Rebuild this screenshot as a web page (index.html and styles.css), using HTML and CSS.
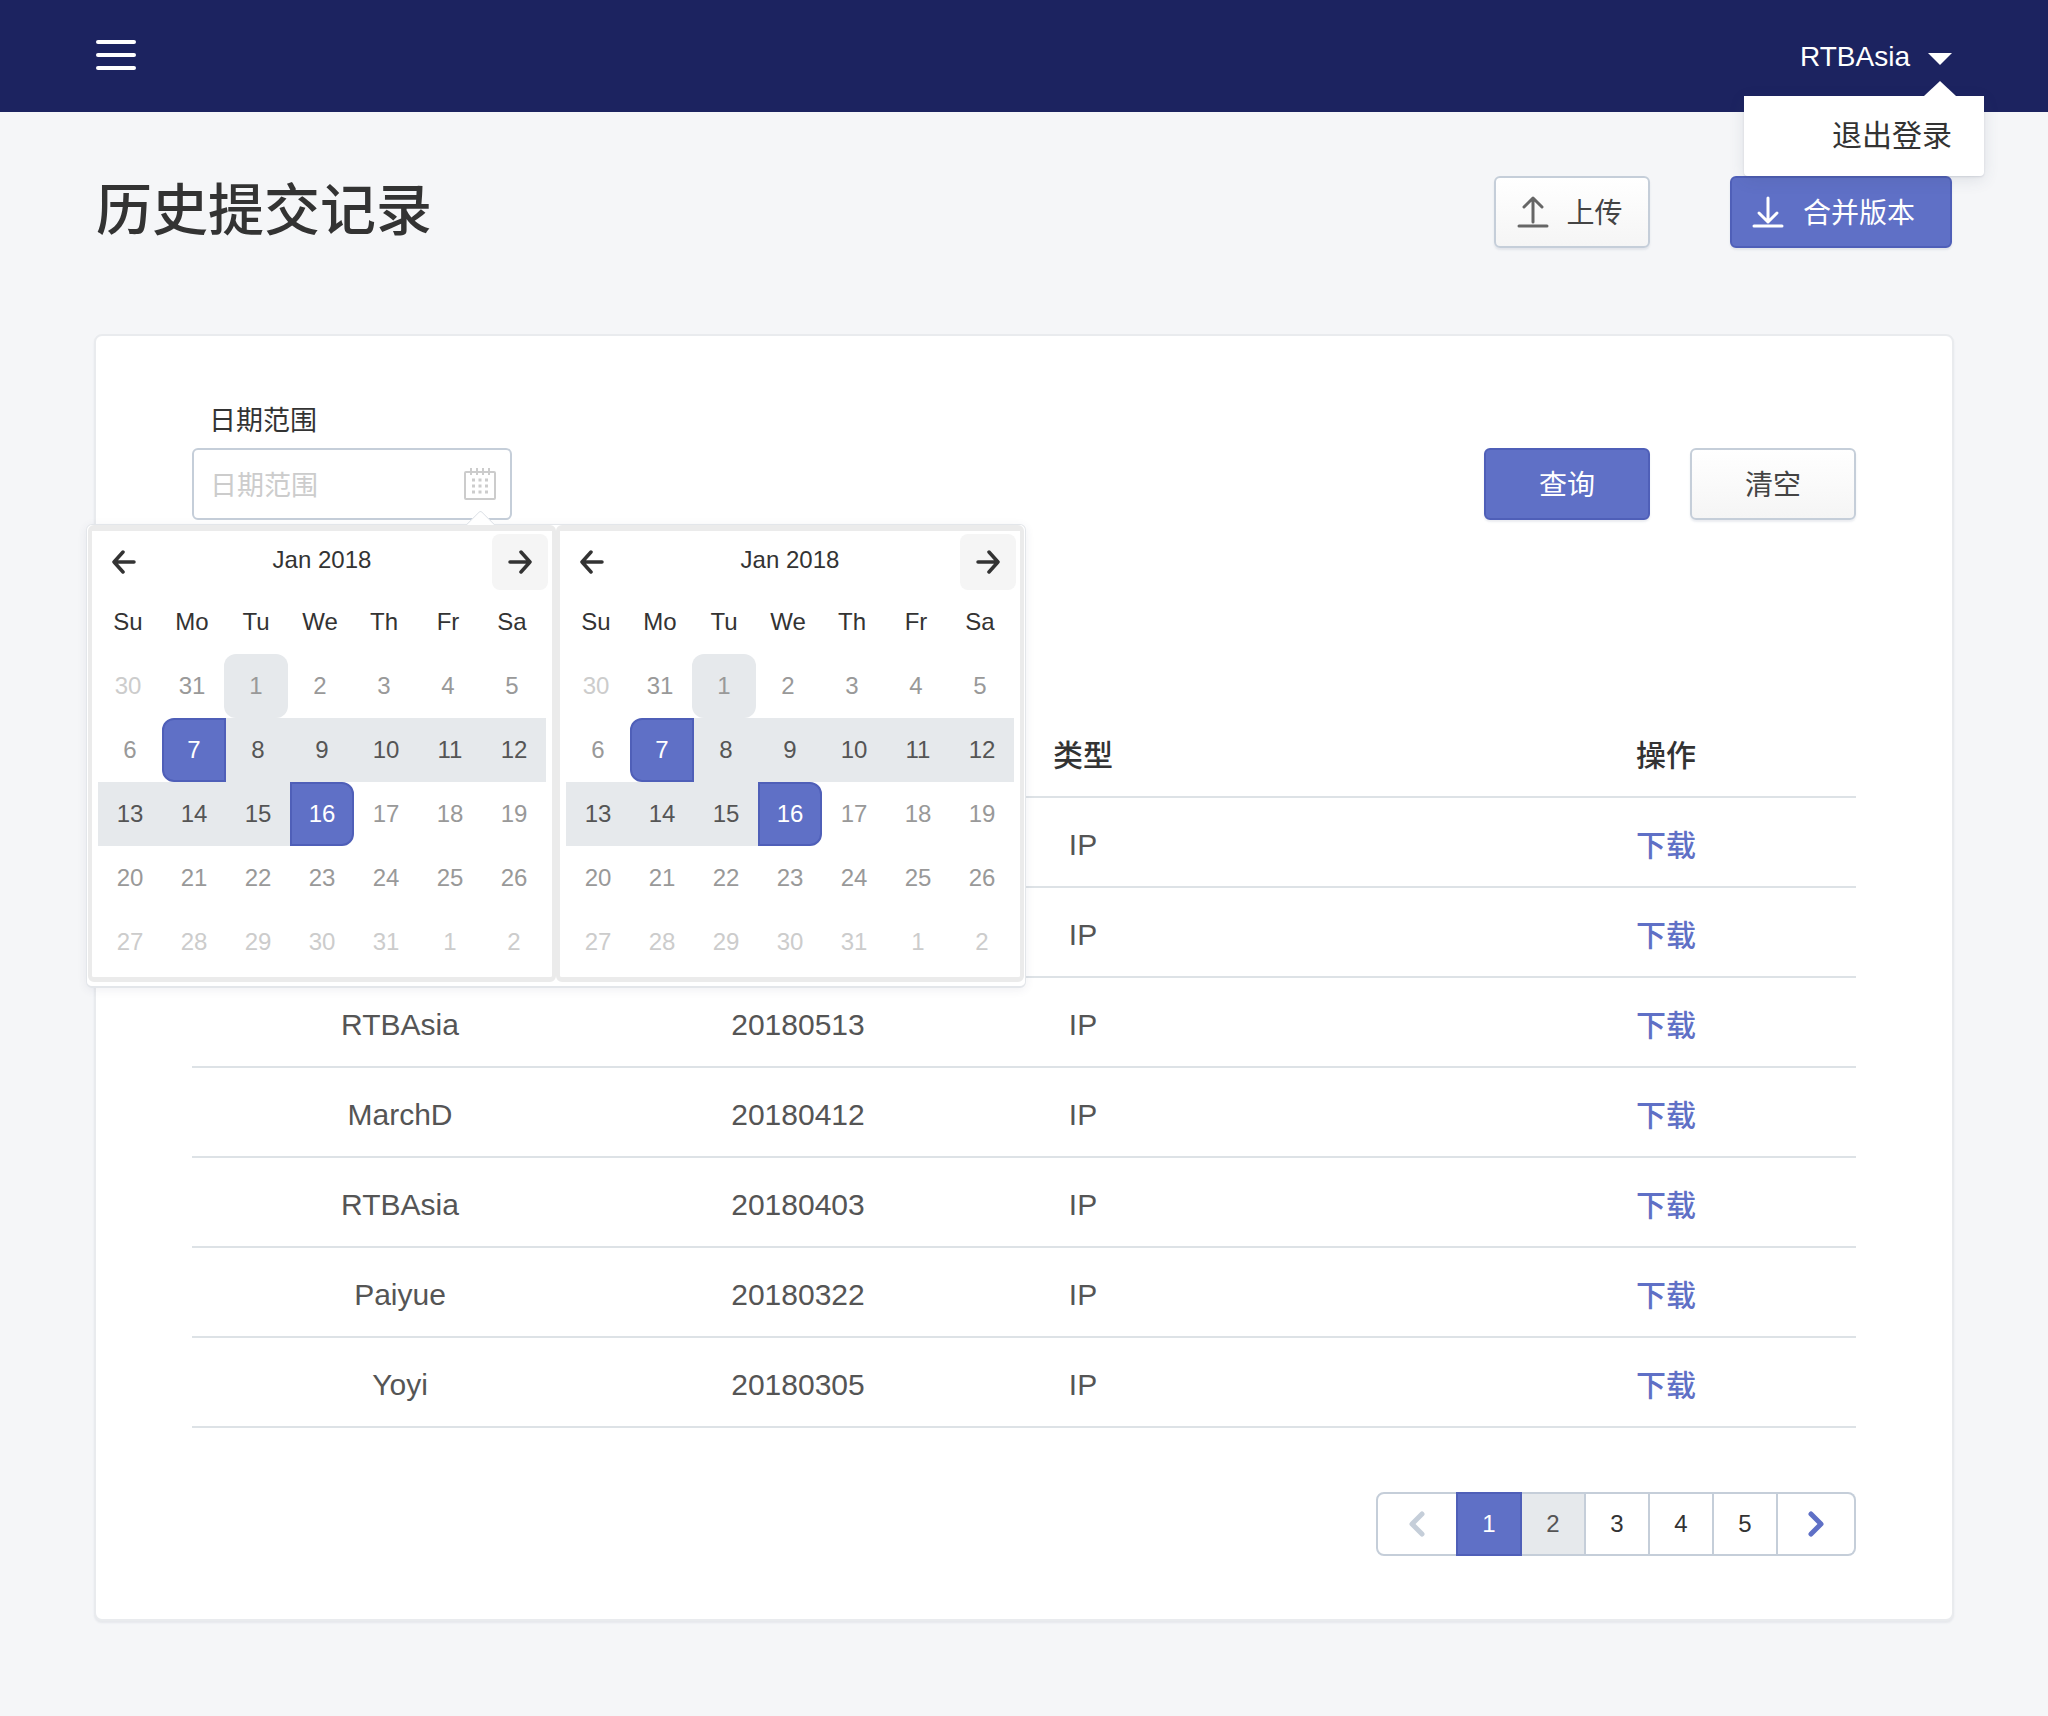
FILE: index.html
```html
<!DOCTYPE html>
<html lang="zh">
<head>
    <meta charset="utf-8">
    <title>历史提交记录</title>
    <link rel="stylesheet" href="styles.css">
</head>
<body>
    <header class="topbar">
        <div class="menu-btn"><span></span><span></span><span></span></div>
        <div class="user">RTBAsia <span class="caret"></span></div>
        <div class="user-menu">退出登录</div>
    </header>

    <div class="page-head">
        <h1>历史提交记录</h1>
        <div class="head-actions">
            <a class="btn btn-upload">
                <svg width="32" height="32" viewBox="0 0 32 32" fill="none" stroke="#666" stroke-linecap="round" stroke-linejoin="round"><path d="M16 26V2M7 11l9-9 9 9" stroke-width="3"/><path d="M2 30h28" stroke-width="3"/></svg>
                上传
            </a>
            <a class="btn btn-primary btn-merge">
                <svg width="32" height="32" viewBox="0 0 32 32" fill="none" stroke="#fff" stroke-linecap="round" stroke-linejoin="round"><path d="M16 2v24M7 17l9 9 9-9" stroke-width="3"/><path d="M2 30h28" stroke-width="3"/></svg>
                合并版本
            </a>
        </div>
    </div>

    <main class="card">
        <div class="filter">
            <div class="date-field">
                <label class="field-label">日期范围</label>
                <div class="date-input">
                    <span class="placeholder">日期范围</span>
                    <svg width="32" height="32" viewBox="0 0 32 32" fill="none" stroke="#ccc" stroke-width="2"><rect x="1" y="4" width="30" height="27" rx="1"/><path d="M7 0v7M13 0v7M19 0v7M25 0v7"/><path d="M8 12h3M14.500 12h3M21 12h3M8 18h3M14.500 18h3M21 18h3M8 24h3M14.500 24h3M21 24h3" stroke-width="3"/></svg>
                </div>
                <div class="picker">
                    <section class="month">
                        <div class="month-head">
                            <span class="nav"><svg width="24" height="24" viewBox="0 0 24 24" fill="none" stroke="#333" stroke-width="3.5" stroke-linecap="round" stroke-linejoin="round"><path d="M22 12H2M11 2L2 12l9 10"/></svg></span>
                            <span class="month-title">Jan 2018</span>
                            <span class="nav nav-hover"><svg width="24" height="24" viewBox="0 0 24 24" fill="none" stroke="#333" stroke-width="3.5" stroke-linecap="round" stroke-linejoin="round"><path d="M2 12h20M13 2l9 10-9 10"/></svg></span>
                        </div>
                        <div class="week week-names"><span>Su</span><span>Mo</span><span>Tu</span><span>We</span><span>Th</span><span>Fr</span><span>Sa</span></div>
                        <div class="week week-first"><span class="off">30</span><span>31</span><span class="today">1</span><span>2</span><span>3</span><span>4</span><span>5</span></div>
                        <div class="week"><span>6</span><span class="sel sel-start">7</span><span class="range">8</span><span class="range">9</span><span class="range">10</span><span class="range">11</span><span class="range">12</span></div>
                        <div class="week"><span class="range">13</span><span class="range">14</span><span class="range">15</span><span class="sel sel-end">16</span><span>17</span><span>18</span><span>19</span></div>
                        <div class="week"><span>20</span><span>21</span><span>22</span><span>23</span><span>24</span><span>25</span><span>26</span></div>
                        <div class="week"><span class="off">27</span><span class="off">28</span><span class="off">29</span><span class="off">30</span><span class="off">31</span><span class="off">1</span><span class="off">2</span></div>
                    </section>
                    <section class="month">
                        <div class="month-head">
                            <span class="nav"><svg width="24" height="24" viewBox="0 0 24 24" fill="none" stroke="#333" stroke-width="3.5" stroke-linecap="round" stroke-linejoin="round"><path d="M22 12H2M11 2L2 12l9 10"/></svg></span>
                            <span class="month-title">Jan 2018</span>
                            <span class="nav nav-hover"><svg width="24" height="24" viewBox="0 0 24 24" fill="none" stroke="#333" stroke-width="3.5" stroke-linecap="round" stroke-linejoin="round"><path d="M2 12h20M13 2l9 10-9 10"/></svg></span>
                        </div>
                        <div class="week week-names"><span>Su</span><span>Mo</span><span>Tu</span><span>We</span><span>Th</span><span>Fr</span><span>Sa</span></div>
                        <div class="week week-first"><span class="off">30</span><span>31</span><span class="today">1</span><span>2</span><span>3</span><span>4</span><span>5</span></div>
                        <div class="week"><span>6</span><span class="sel sel-start">7</span><span class="range">8</span><span class="range">9</span><span class="range">10</span><span class="range">11</span><span class="range">12</span></div>
                        <div class="week"><span class="range">13</span><span class="range">14</span><span class="range">15</span><span class="sel sel-end">16</span><span>17</span><span>18</span><span>19</span></div>
                        <div class="week"><span>20</span><span>21</span><span>22</span><span>23</span><span>24</span><span>25</span><span>26</span></div>
                        <div class="week"><span class="off">27</span><span class="off">28</span><span class="off">29</span><span class="off">30</span><span class="off">31</span><span class="off">1</span><span class="off">2</span></div>
                    </section>
                </div>
            </div>
            <div class="filter-actions">
                <a class="btn btn-primary btn-wide">查询</a>
                <a class="btn btn-wide">清空</a>
            </div>
        </div>

        <div class="records">
            <div class="row row-head"><span></span><span></span><span class="type">类型</span><span class="action">操作</span></div>
            <div class="row"><span></span><span></span><span class="type">IP</span><a class="action">下载</a></div>
            <div class="row"><span></span><span></span><span class="type">IP</span><a class="action">下载</a></div>
            <div class="row"><span>RTBAsia</span><span>20180513</span><span class="type">IP</span><a class="action">下载</a></div>
            <div class="row"><span>MarchD</span><span>20180412</span><span class="type">IP</span><a class="action">下载</a></div>
            <div class="row"><span>RTBAsia</span><span>20180403</span><span class="type">IP</span><a class="action">下载</a></div>
            <div class="row"><span>Paiyue</span><span>20180322</span><span class="type">IP</span><a class="action">下载</a></div>
            <div class="row"><span>Yoyi</span><span>20180305</span><span class="type">IP</span><a class="action">下载</a></div>
        </div>

        <nav class="pager">
            <a class="page page-prev"><svg width="18" height="26" viewBox="0 0 18 26" fill="none" stroke="#c5ced9" stroke-width="5" stroke-linecap="round" stroke-linejoin="round"><path d="M14 3L4 13l10 10"/></svg></a>
            <a class="page page-on">1</a>
            <a class="page page-hover">2</a>
            <a class="page">3</a>
            <a class="page">4</a>
            <a class="page">5</a>
            <a class="page page-next"><svg width="18" height="26" viewBox="0 0 18 26" fill="none" stroke="#5f70c6" stroke-width="5" stroke-linecap="round" stroke-linejoin="round"><path d="M4 3l10 10L4 23"/></svg></a>
        </nav>
    </main>
</body>
</html>
```
FILE: styles.css
```css
* {
    box-sizing: border-box;
}

body {
    margin: 0;
    min-height: 1716px;
    background: #f5f6f8;
    color: #333;
    font-family: "Liberation Sans", "Noto Sans CJK SC", sans-serif;
    font-size: 28px;
}

/* top bar */
.topbar {
    position: relative;
    height: 112px;
    padding: 0 96px;
    background: #1c2360;
    color: #fff;
    display: flex;
    justify-content: space-between;
    align-items: center;
}

.menu-btn {
    width: 40px;
    margin-top: -2px;
    display: flex;
    flex-direction: column;
    gap: 9px;
}

.menu-btn span {
    height: 4px;
    border-radius: 2px;
    background: #fff;
}

.user {
    margin-top: 2px;
    display: flex;
    align-items: center;
    gap: 18px;
}

.caret {
    margin-top: 4px;
    border-top: 12px solid #fff;
    border-left: 12px solid transparent;
    border-right: 12px solid transparent;
}

.user-menu {
    position: absolute;
    top: 96px;
    right: 64px;
    width: 240px;
    height: 80px;
    padding-right: 32px;
    background: #fff;
    color: #333;
    font-size: 30px;
    line-height: 80px;
    text-align: right;
    border-radius: 0 0 4px 4px;
    box-shadow: 0 4px 16px rgba(60, 70, 100, 0.12), 0 1px 2px rgba(60, 70, 100, 0.15);
    z-index: 5;
}

.user-menu::before {
    content: "";
    position: absolute;
    top: -15px;
    right: 28px;
    border-bottom: 15px solid #fff;
    border-left: 16px solid transparent;
    border-right: 16px solid transparent;
}

/* page title */
.page-head {
    padding: 64px 96px 0;
    display: flex;
    justify-content: space-between;
    align-items: flex-start;
}

.page-head h1 {
    margin: 0;
    font-size: 56px;
    font-weight: 500;
    line-height: 70px;
}

.head-actions {
    display: flex;
    gap: 80px;
}

.btn {
    height: 72px;
    padding-bottom: 2px;
    border: 2px solid #c5ced9;
    border-radius: 6px;
    background: linear-gradient(#fff, #f5f5f5);
    box-shadow: 0 2px 2px rgba(120, 135, 160, 0.15);
    color: #444;
    font-size: 28px;
    display: flex;
    justify-content: center;
    align-items: center;
}

.btn svg {
    margin-top: 2px;
}

.btn-primary {
    border-color: #4f5fb8;
    background: #5f70c6;
    color: #fff;
}

.btn-upload {
    width: 156px;
    padding-right: 4px;
    gap: 17px;
}

.btn-merge {
    width: 222px;
    padding-right: 15px;
    gap: 19px;
}

.btn-wide {
    width: 166px;
}

/* card */
.card {
    width: 1860px;
    margin: 86px 0 0 94px;
    padding: 64px 96px 63px;
    background: #fff;
    border: 2px solid #e9ebee;
    border-radius: 8px;
    box-shadow: 0 2px 2px rgba(120, 135, 160, 0.12);
}

.filter {
    display: flex;
    justify-content: space-between;
    align-items: flex-end;
}

.date-field {
    position: relative;
    width: 320px;
    font-size: 27px;
}

.field-label {
    display: block;
    height: 40px;
    margin-bottom: 8px;
    padding-left: 17px;
    line-height: 42px;
}

.date-input {
    height: 72px;
    padding: 0 14px 0 16px;
    border: 2px solid #c5ced9;
    border-radius: 6px;
    display: flex;
    justify-content: space-between;
    align-items: center;
}

.placeholder {
    margin-bottom: 2px;
    color: #ccc;
}

.filter-actions {
    display: flex;
    gap: 40px;
}

/* date range picker */
.picker {
    position: absolute;
    top: 124px;
    left: -106px;
    padding: 0 1px 4px;
    background: #fff;
    border: 1px solid #e3e6ea;
    border-bottom-width: 2px;
    border-radius: 6px;
    box-shadow: 0 2px 10px rgba(60, 70, 100, 0.08);
    display: flex;
    z-index: 3;
}

.picker::before {
    content: "";
    position: absolute;
    top: -10px;
    left: 381px;
    width: 24px;
    height: 24px;
    border-top: 1px solid #dfe3e8;
    border-left: 1px solid #dfe3e8;
    border-top-left-radius: 3px;
    background: #fff;
    transform: rotate(45deg);
    z-index: -1;
}

.month {
    width: 468px;
    padding: 3px 6px;
    border: solid #ebebeb;
    border-width: 6px 4px 5px;
    border-radius: 6px;
    background: #fff;
    font-size: 24px;
}

.month-head {
    height: 56px;
    margin: 0 -2px;
    display: flex;
    justify-content: space-between;
    align-items: center;
}

.month-title {
    padding-bottom: 5px;
}

.nav {
    width: 56px;
    height: 56px;
    border-radius: 8px;
    display: flex;
    justify-content: center;
    align-items: center;
}

.nav-hover {
    background: #f5f5f5;
}

.week {
    display: grid;
    grid-template-columns: repeat(7, 64px);
    color: #999;
    line-height: 64px;
    text-align: center;
}

.week-names {
    margin-left: -2px;
    color: #333;
}

.week-first {
    margin-left: -2px;
}

.week .off {
    color: #ccc;
}

.week .today {
    border-radius: 12px;
    background: #e6e9ec;
}

.week .range {
    background: #e6e9ec;
    color: #555;
}

.week .sel {
    border: 2px solid #4f5fb8;
    background: #5f70c6;
    color: #fff;
    line-height: 60px;
}

.week .sel-start {
    border-radius: 12px 0 0 12px;
}

.week .sel-end {
    border-radius: 0 12px 12px 0;
}

/* records table */
.records {
    margin-top: 188px;
}

.row {
    height: 90px;
    padding-top: 6px;
    border-bottom: 2px solid #dde2e6;
    color: #555;
    font-size: 30px;
    display: grid;
    grid-template-columns: 416px 380px 190px 1fr;
    align-items: center;
    text-align: center;
}

.row-head {
    padding-top: 1px;
    color: #333;
    font-weight: 500;
}

.action {
    padding-left: 298px;
}

a.action {
    margin-bottom: 4px;
    color: #5f70c6;
    font-weight: 500;
}

/* pagination */
.pager {
    width: 480px;
    height: 64px;
    margin: 64px 0 0 auto;
    display: flex;
}

.page {
    width: 64px;
    border: 2px solid #c5ced9;
    border-left-width: 0;
    color: #333;
    font-size: 24px;
    display: flex;
    justify-content: center;
    align-items: center;
}

.page-prev {
    width: 82px;
    border-left-width: 2px;
    border-radius: 8px 0 0 8px;
}

.page-next {
    width: 78px;
    border-radius: 0 8px 8px 0;
}

.page-on {
    width: 66px;
    margin-left: -2px;
    border: 2px solid #4f5fb8;
    background: #5f70c6;
    color: #fff;
}

.page-hover {
    background: #e6e9ec;
    color: #555;
}
```
